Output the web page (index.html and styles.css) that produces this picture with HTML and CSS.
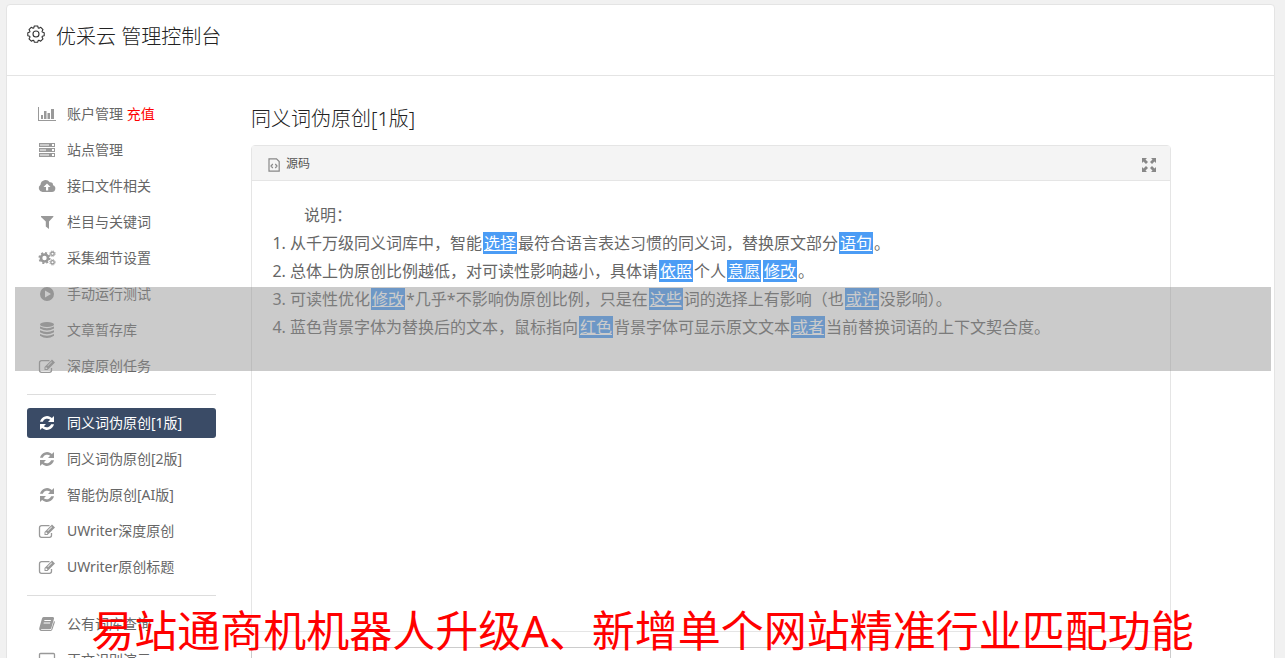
FILE: index.html
```html
<!DOCTYPE html>
<html lang="zh-CN">
<head>
  <meta charset="UTF-8">
  <meta name="viewport" content="width=device-width, initial-scale=1.0">
  <title>优采云 管理控制台</title>
  <link rel="stylesheet" href="styles.css">
</head>
<body>

  <!-- Shared icons -->
  <svg class="sprite" aria-hidden="true">
    <symbol id="i-gear" viewBox="0 0 18 18">
      <path fill="none" stroke="currentColor" stroke-width="1.1" stroke-linejoin="round" d="M7.3 1h3.4l.6 2 .6.3 1.9-1 2.2 2.3-1 1.8.3.7 1.9.6v3l-1.9.6-.3.8 1 1.8-2.3 2.3-1.8-1-.7.3-.5 1.7H7.3l-.5-1.7-.7-.3-1.8 1L2 13.9l1-1.8-.3-.8-1.9-.6v-3l1.9-.6.3-.7-1-1.8L4.2 2.3l1.9 1 .6-.3z"/>
      <circle cx="9" cy="9" r="3" fill="none" stroke="currentColor" stroke-width="1.1"/>
    </symbol>
    <symbol id="i-chart" viewBox="0 0 18 16">
      <path d="M0 1h1v13h17v1H0zM3 9h2v4H3zM6 5h2.500v8H6zM9.500 7H12v6H9.500zM13 3h3v10h-3z"/>
    </symbol>
    <symbol id="i-server" viewBox="0 0 18 16">
      <path fill-rule="evenodd" d="M1 1h16v4H1zM2 2.500h9v1H2zM14 2h2v2h-2zM1 6h16v4H1zM2 7.500h6v1H2zM14 7h2v2h-2zM1 11h16v4H1zM2 12.500h9v1H2zM14 12h2v2h-2z"/>
    </symbol>
    <symbol id="i-cloud" viewBox="0 0 18 16">
      <path fill-rule="evenodd" d="M4.500 14A4 4 0 0 1 2.500 6.700 5 5 0 0 1 11.700 4.300 2.600 2.600 0 0 1 15 7.200 3.500 3.500 0 0 1 14 14zM9 5.500L5.500 9H8v3.500h2.200V9h2.300z"/>
    </symbol>
    <symbol id="i-filter" viewBox="0 0 18 16">
      <path d="M3 2h12.500l-.3 1L11 7.500V15l-3.200-2.500v-5L3 3z"/>
    </symbol>
    <symbol id="i-gears" viewBox="0 0 18 16">
      <circle cx="6.500" cy="8" r="3.500" fill="none" stroke="currentColor" stroke-width="2.600"/>
      <circle cx="6.500" cy="8" r="5.200" fill="none" stroke="currentColor" stroke-width="1.700" stroke-dasharray="2.040 2.040"/>
      <circle cx="14.500" cy="3.700" r="1.700" fill="none" stroke="currentColor" stroke-width="1.300"/>
      <circle cx="14.500" cy="3.700" r="2.700" fill="none" stroke="currentColor" stroke-width="1" stroke-dasharray="1.060 1.060"/>
      <circle cx="14.500" cy="12.300" r="1.700" fill="none" stroke="currentColor" stroke-width="1.300"/>
      <circle cx="14.500" cy="12.300" r="2.700" fill="none" stroke="currentColor" stroke-width="1" stroke-dasharray="1.060 1.060"/>
    </symbol>
    <symbol id="i-play" viewBox="0 0 18 16">
      <path fill-rule="evenodd" d="M9 1a7 7 0 1 1 0 14A7 7 0 0 1 9 1zM7 4.500v7L13 8z"/>
    </symbol>
    <symbol id="i-database" viewBox="0 0 18 16">
      <ellipse cx="9" cy="2.500" rx="7" ry="2.500"/>
      <path d="M2 4.500q7 3.500 14 0v2q-7 4-14 0zM2 8.300q7 3.500 14 0v2q-7 4-14 0zM2 12.100q7 3.500 14 0v1.600q-7 4.500-14 0z"/>
    </symbol>
    <symbol id="i-edit" viewBox="0 0 18 16">
      <path fill="none" stroke="currentColor" stroke-width="1.300" d="M11.500 2.700H3.500a2 2 0 0 0-2 2v7.600a2 2 0 0 0 2 2h8a2 2 0 0 0 2-2V10"/>
      <path fill-rule="evenodd" d="M14 1.500l3 3L9.500 12h-3V9zM7.500 9.500v1.500H9l.5-.5L8 9zM9.500 7.500l.5.5 4-4-.5-.5z"/>
    </symbol>
    <symbol id="i-refresh" viewBox="0 0 18 16">
      <path d="M2 6.700A7.200 7.200 0 0 1 13.900 3L16 1v6h-6l2.200-2.200A4.700 4.700 0 0 0 4.800 6.700zM16 9.300A7.200 7.200 0 0 1 4.100 13L2 15V9h6l-2.200 2.200a4.700 4.700 0 0 0 7.400-1.900z"/>
    </symbol>
    <symbol id="i-book" viewBox="0 0 18 16">
      <path fill-rule="evenodd" d="M5.500 1H15q1.500.4 1 1.800L13.300 12q-.4 1.200-1.700 1.200H3.300q-.8.900.4.900h8.700q.7 0 1-.9L16 5q1.200.4.800 1.600l-2.400 7q-.5 1.400-1.800 1.400H3.500Q.7 14.500 1.300 12L4 2.500Q4.300 1.300 5.500 1zM6.500 4l-.3 1h6.500l.3-1zM5.800 6.500l-.3 1H12l.3-1z"/>
    </symbol>
    <symbol id="i-laptop" viewBox="0 0 18 16">
      <path fill="none" stroke="currentColor" stroke-width="1.300" d="M2.500 1.500h13a1 1 0 0 1 1 1v9a1 1 0 0 1-1 1h-13a1 1 0 0 1-1-1v-9a1 1 0 0 1 1-1z"/>
      <path d="M0 14h18v1H0z"/>
    </symbol>
    <symbol id="i-source" viewBox="0 0 12 14">
      <path fill="none" stroke="currentColor" stroke-width="1.200" d="M1 .8h7.500L11.200 3.500v9.700H1zM4.800 6L3 8l1.800 2M7.300 6L9 8l-1.700 2"/>
    </symbol>
    <symbol id="i-expand" viewBox="0 0 14 14">
      <path d="M0 0h5L3.500 1.500l2.500 2.500L4 6 1.500 3.500 0 5zM14 0v5l-1.500-1.500L10 6 8 4l2.500-2.500L9 0zM0 14V9l1.500 1.500L4 8l2 2-2.500 2.500L5 14zM14 14H9l1.500-1.500L8 10l2-2 2.500 2.500L14 9z"/>
    </symbol>
  </svg>

  <div class="panel">
    <header class="panel-header">
      <svg class="gear"><use href="#i-gear"/></svg>
      <h1>优采云 管理控制台</h1>
    </header>

    <div class="layout">
      <nav class="sidebar">
        <ul>
          <li><a href="#"><svg><use href="#i-chart"/></svg><span>账户管理 <em>充值</em></span></a></li>
          <li><a href="#"><svg><use href="#i-server"/></svg><span>站点管理</span></a></li>
          <li><a href="#"><svg><use href="#i-cloud"/></svg><span>接口文件相关</span></a></li>
          <li><a href="#"><svg><use href="#i-filter"/></svg><span>栏目与关键词</span></a></li>
          <li><a href="#"><svg><use href="#i-gears"/></svg><span>采集细节设置</span></a></li>
          <li><a href="#"><svg><use href="#i-play"/></svg><span>手动运行测试</span></a></li>
          <li><a href="#"><svg><use href="#i-database"/></svg><span>文章暂存库</span></a></li>
          <li><a href="#"><svg><use href="#i-edit"/></svg><span>深度原创任务</span></a></li>
        </ul>
        <ul>
          <li><a href="#" class="active"><svg><use href="#i-refresh"/></svg><span>同义词伪原创[1版]</span></a></li>
          <li><a href="#"><svg><use href="#i-refresh"/></svg><span>同义词伪原创[2版]</span></a></li>
          <li><a href="#"><svg><use href="#i-refresh"/></svg><span>智能伪原创[AI版]</span></a></li>
          <li><a href="#"><svg><use href="#i-edit"/></svg><span>UWriter深度原创</span></a></li>
          <li><a href="#"><svg><use href="#i-edit"/></svg><span>UWriter原创标题</span></a></li>
        </ul>
        <ul>
          <li><a href="#"><svg><use href="#i-book"/></svg><span>公有词库查询</span></a></li>
          <li><a href="#"><svg><use href="#i-laptop"/></svg><span>正文识别演示</span></a></li>
        </ul>
      </nav>

      <main class="content">
        <h2>同义词伪原创[1版]</h2>

        <div class="editor">
          <div class="toolbar">
            <button type="button" class="source"><svg><use href="#i-source"/></svg>源码</button>
            <button type="button" class="expand" aria-label="全屏"><svg><use href="#i-expand"/></svg></button>
          </div>
          <div class="editor-body">
            <p>说明：</p>
            <ol>
              <li>从千万级同义词库中，智能<mark>选择</mark>最符合语言表达习惯的同义词，替换原文部分<mark>语句</mark>。</li>
              <li>总体上伪原创比例越低，对可读性影响越小，具体请<mark>依照</mark>个人<mark>意愿</mark><mark>修改</mark>。</li>
              <li>可读性优化<mark>修改</mark>*几乎*不影响伪原创比例，只是在<mark>这些</mark>词的选择上有影响（也<mark>或许</mark>没影响）。</li>
              <li>蓝色背景字体为替换后的文本，鼠标指向<mark>红色</mark>背景字体可显示原文文本<mark>或者</mark>当前替换词语的上下文契合度。</li>
            </ol>
          </div>
        </div>

        <textarea class="result" aria-label="结果"></textarea>
      </main>
    </div>
  </div>

  <div class="band"></div>
  <p class="caption">易站通商机机器人升级A、新增单个网站精准行业匹配功能</p>

</body>
</html>
```
FILE: styles.css
```css
/* General page styling */
* {
  box-sizing: border-box;
}

body {
  margin: 0;
  padding: 4px 10px 0 6px;
  height: 100vh;
  overflow: hidden;
  position: relative;
  background-color: #f1f1f1;
  color: #666;
  font-family: "Noto Sans", "Noto Sans CJK SC", sans-serif;
  font-size: 14px;
}

svg {
  fill: currentColor;
  flex: none;
}

.sprite {
  display: none;
}

.panel {
  background-color: #fff;
  border: 1px solid #e4e4e4;
  border-radius: 4px;
}

.panel-header {
  display: flex;
  gap: 11px;
  height: 71px;
  padding: 16px 20px;
  border-bottom: 1px solid #e4e4e4;
  color: #333;
}

.gear {
  width: 18px;
  height: 18px;
  margin-top: 4px;
}

h1,
h2 {
  margin: 0;
  font-size: 20px;
  font-weight: 300;
  line-height: 32px;
  color: #222;
}

.layout {
  display: flex;
  gap: 35px;
  padding: 20px 103px 20px 20px;
}

/* Sidebar */
.sidebar {
  flex: 0 0 189px;
  padding-top: 3px;
}

.sidebar ul {
  display: flex;
  flex-direction: column;
  gap: 6px;
  margin: 0;
  padding: 0;
  list-style: none;
}

.sidebar ul + ul {
  margin-top: 13px;
  padding-top: 13px;
  border-top: 1px solid #ddd;
}

.sidebar a {
  display: flex;
  align-items: center;
  gap: 11px;
  height: 30px;
  padding: 0 11px;
  border-radius: 3px;
  color: #666;
  text-decoration: none;
}

.sidebar span {
  padding-bottom: 2px;
}

.sidebar svg {
  width: 18px;
  height: 16px;
  color: #999;
}

.sidebar em {
  color: #f00;
  font-style: normal;
}

.sidebar a.active,
.sidebar .active svg {
  background-color: #3a4b66;
  color: #fff;
}

/* Editor */
.content {
  flex: 1;
  min-width: 0;
  padding-top: 7px;
}

.editor {
  margin-top: 10px;
  border: 1px solid #e5e5e5;
  border-radius: 4px;
}

.toolbar {
  display: flex;
  align-items: center;
  justify-content: space-between;
  height: 35px;
  padding: 0 14px 0 16px;
  background-color: #f4f4f4;
  border-bottom: 1px solid #e5e5e5;
}

.toolbar button {
  display: flex;
  align-items: center;
  gap: 6px;
  padding: 0;
  border: none;
  background: none;
  color: #555;
  font-family: inherit;
  font-size: 12px;
}

.toolbar svg {
  width: 14px;
  height: 14px;
  margin-top: 3px;
  color: #888;
}

.toolbar .source svg {
  width: 12px;
}

.editor-body {
  min-height: 450px;
  padding: 20px;
  font-size: 16px;
  line-height: 28px;
}

.editor-body p {
  margin: 0;
  text-indent: 2em;
}

.editor-body ol {
  margin: 0;
  padding-left: 18px;
}

mark {
  margin: 0 1px;
  padding: 0 1px;
  background-color: #4b9cf5;
  color: #fff;
  text-decoration: underline;
}

.result {
  display: block;
  width: 100%;
  height: 200px;
  margin-top: 15px;
  border: 1px solid #ccc;
  resize: none;
}

/* Overlays */
.band {
  position: absolute;
  top: 287px;
  left: 15px;
  right: 14px;
  height: 84px;
  background-color: rgba(147, 147, 147, 0.48);
}

.caption {
  position: absolute;
  bottom: 0;
  left: 0;
  right: 0;
  margin: 0;
  color: #f00;
  font-size: 43px;
  line-height: 54px;
  text-align: center;
  white-space: nowrap;
}
```
